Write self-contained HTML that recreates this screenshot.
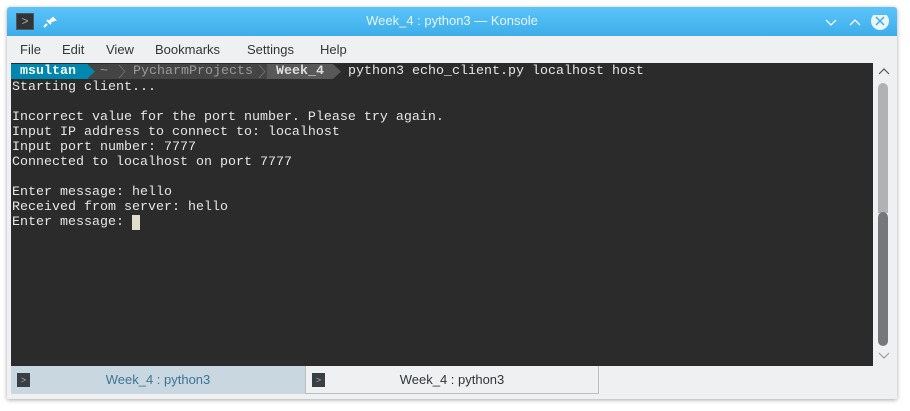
<!DOCTYPE html>
<html><head><style>
*{margin:0;padding:0;box-sizing:border-box}
body{width:910px;height:411px;background:#fff;position:relative;overflow:hidden;font-family:"Liberation Sans","DejaVu Sans",sans-serif}
.win{position:absolute;left:7px;top:7px;width:890px;height:392px;background:#eff0f1;box-shadow:0 1px 4px rgba(0,0,0,.35);border-radius:3px 3px 0 0;overflow:hidden}
.title{position:absolute;left:0;top:0;width:890px;height:29px;background:linear-gradient(#5bc4fa,#3daee9);color:#e8f4fc;font-size:13px;text-align:center;line-height:28px}
.menu{position:absolute;top:30px;left:0;height:28px;font-size:13px;color:#31363b;line-height:26px}
.menu span{position:absolute;white-space:nowrap}
.term{position:absolute;left:4px;top:56px;width:862px;height:303px;background:#2b2b2b;font-family:"Liberation Mono","DejaVu Sans Mono",monospace;font-size:13.33px;line-height:15px;color:#e6e6e6}
.seg{position:absolute;top:1px;height:15px}
.p{position:absolute;top:1px;line-height:15px;white-space:pre}
.body{position:absolute;left:1px;top:17px;white-space:pre}
.tabs{position:absolute;top:359px;left:4px;width:882px;height:28px}
.tab{position:absolute;top:0;height:28px;font-size:13px;line-height:28px;text-align:center}
.ic{position:absolute;width:13px;height:14px;background:#3a3f44;top:7px;color:#aaa;font-size:9px;line-height:14px;text-align:center}
</style></head><body>
<div class="win">
 <div class="title">Week_4 : python3 — Konsole
  <div style="position:absolute;left:9px;top:6px;width:18px;height:17px;background:#2f3438;border:1px solid #555;color:#aaa;font-size:12px;line-height:15px">&gt;</div>
  <svg style="position:absolute;left:36px;top:7px" width="14" height="14" viewBox="0 0 14 14"><path d="M4 10 L1 13 M4 6 L8 10 M6 8 L10 4 L12 6 Z" stroke="#fff" stroke-width="2" fill="#fff"/></svg>
  <svg style="position:absolute;left:818px;top:8px" width="66" height="16" viewBox="0 0 66 16"><path d="M1 5 L6 10 L11 5" stroke="#fff" fill="none" stroke-width="1.3"/><path d="M25 10 L30 5 L35 10" stroke="#fff" fill="none" stroke-width="1.3"/><circle cx="55" cy="6" r="9" fill="#eaf5fd"/><path d="M51 2 L59 10 M59 2 L51 10" stroke="#3daee9" stroke-width="1.5"/></svg>
 </div>
 <div class="menu"><span style="left:13px">File</span><span style="left:55px">Edit</span><span style="left:99px">View</span><span style="left:148px">Bookmarks</span><span style="left:240px">Settings</span><span style="left:313px">Help</span></div>
 <div class="term">
  <div class="seg" style="left:0;width:256px;background:#444"></div>
  <div class="seg" style="left:0;width:77px;background:#0087af"></div>
  <svg class="seg" style="left:76px" width="10" height="15"><path d="M0 0 L8 7.5 L0 15Z" fill="#0087af"/></svg>
  <div class="seg" style="left:256px;width:66px;background:#585858"></div>
  <svg class="seg" style="left:322px" width="10" height="15"><path d="M0 0 L8 7.5 L0 15Z" fill="#585858"/></svg>
  <svg class="seg" style="left:106px" width="10" height="15"><path d="M2 1 L8 7.5 L2 14" stroke="#6a6a6a" fill="none"/></svg>
  <svg class="seg" style="left:246px" width="10" height="15"><path d="M2 1 L8 7.5 L2 14" stroke="#6a6a6a" fill="none"/></svg>
  <span class="p" style="left:9px;color:#fff;font-weight:bold">msultan</span>
  <span class="p" style="left:89px;color:#9a9a9a">~</span>
  <span class="p" style="left:122px;color:#9a9a9a">PycharmProjects</span>
  <span class="p" style="left:265px;color:#ddd;font-weight:bold">Week_4</span>
  <span class="p" style="left:337px">python3 echo_client.py localhost host</span>
  <div class="body">Starting client...

Incorrect value for the port number. Please try again.
Input IP address to connect to: localhost
Input port number: 7777
Connected to localhost on port 7777

Enter message: hello
Received from server: hello
Enter message: <span style="background:#e0dccb"> </span></div>
 </div>
 <svg style="position:absolute;left:870px;top:60px" width="14" height="10"><path d="M2 7 L7 2 L12 7" stroke="#555" fill="none" stroke-width="1.2"/></svg>
 <div style="position:absolute;left:871px;top:76px;width:10px;height:130px;background:#b1b2b3;border-radius:5px 5px 0 0"></div>
 <div style="position:absolute;left:871px;top:205px;width:10px;height:134px;background:#76777a;border-radius:5px"></div>
 <svg style="position:absolute;left:870px;top:343px" width="14" height="10"><path d="M2 3 L7 8 L12 3" stroke="#999" fill="none" stroke-width="1.2"/></svg>
 <div class="tabs">
  <div class="tab" style="left:0;width:294px;background:#c9d7e0;color:#3e7494"><div class="ic" style="left:6px">&gt;</div>Week_4 : python3</div>
  <div class="tab" style="left:294px;width:294px;background:#eff0f1;color:#31363b;border:1px solid #bcbebf;border-top:none"><div class="ic" style="left:6px">&gt;</div>Week_4 : python3</div>
 </div>
</div>
</body></html>
